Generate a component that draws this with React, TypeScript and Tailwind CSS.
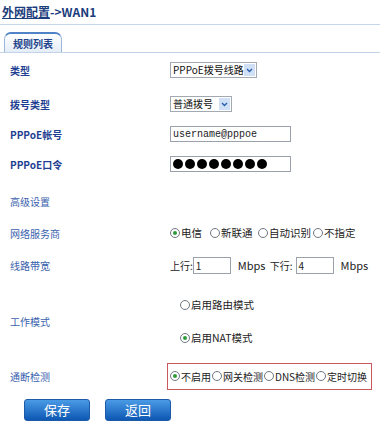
import React from "react";

const cjk = { fontFamily: '"Noto Sans CJK SC", "Liberation Sans", sans-serif' };

const Radio = ({ on }: { on?: boolean }) => (
  <span className="inline-flex h-[10px] w-[10px] shrink-0 items-center justify-center rounded-full border border-[#6f7780] bg-white">
    {on && <span className="h-[4px] w-[4px] rounded-full bg-[#2f9a3a]" />}
  </span>
);

const Opt = ({ on, label, className = "" }: { on?: boolean; label: string; className?: string }) => (
  <span className={"inline-flex shrink-0 items-center gap-[1px] whitespace-nowrap text-[#222] " + className}>
    <Radio on={on} />
    <span>{label}</span>
  </span>
);

const Select = ({ value, w }: { value: string; w: string }) => (
  <div className={"flex h-[16px] items-center border border-[#a2a9b3] bg-white " + w}>
    <span
      className="flex-1 whitespace-nowrap pl-[2px] text-[10px] leading-none text-[#111]"
      style={{ fontFamily: '"Noto Sans CJK SC", serif' }}
    >
      {value}
    </span>
    <span className="mr-[1px] flex h-[12px] w-[11px] shrink-0 items-center justify-center bg-[#cfe0f6]">
      <svg width="7" height="5" viewBox="0 0 7 5">
        <path d="M1 1 L3.5 3.5 L6 1" stroke="#2a5fb0" strokeWidth="1.4" fill="none" />
      </svg>
    </span>
  </div>
);

const Row = ({ label, strong, h, children }: { label: string; strong?: boolean; h: string; children?: React.ReactNode }) => (
  <div className={"flex items-center " + h}>
    <div
      className={
        "w-[170px] shrink-0 whitespace-nowrap pl-[10px] text-[10px] " +
        (strong ? "font-bold text-[#1f3f92]" : "text-[#3a62ad]")
      }
    >
      {label}
    </div>
    <div className="flex items-center whitespace-nowrap">{children}</div>
  </div>
);

export default function App() {
  return (
    <div className="h-[426px] w-[380px] overflow-hidden bg-white" style={cjk}>
      <div className="flex h-[25px] items-center border-b border-[#c6d6ea] pl-[2px] text-[12px] font-bold text-[#1b3d7c]">
        <span className="underline">外网配置</span>
        <span>-&gt;WAN1</span>
      </div>
      <div className="flex h-[28px] items-end border-b border-[#c3d4ea] pl-[4px]">
        <div className="flex h-[20px] w-[58px] items-center justify-center rounded-t-[7px] border border-b-0 border-[#9db8da] border-t-[2px] border-t-[#4f82c6] bg-gradient-to-b from-white to-[#e4edf8] text-[10px] font-bold text-[#22438a]">
          规则列表
        </div>
      </div>

      <Row label="类型" strong h="h-[34px]">
        <Select value="PPPoE拨号线路" w="w-[87px]" />
      </Row>
      <Row label="拨号类型" strong h="h-[34px]">
        <Select value="普通拨号" w="w-[62px]" />
      </Row>
      <Row label="PPPoE帐号" strong h="h-[26px]">
        <div
          className="flex h-[16px] w-[121px] items-center border border-[#9aa1aa] pl-[2px] text-[10px] text-[#222]"
          style={{ fontFamily: '"Liberation Mono", monospace' }}
        >
          username@pppoe
        </div>
      </Row>
      <Row label="PPPoE口令" strong h="h-[34px]">
        <div className="flex h-[16px] w-[121px] items-center gap-[2px] border border-[#9aa1aa] pl-[2px]">
          {Array.from({ length: 8 }).map((_, i) => (
            <span key={i} className="h-[10px] w-[10px] rounded-full bg-black" />
          ))}
        </div>
      </Row>
      <Row label="高级设置" h="h-[40px]" />
      <Row label="网络服务商" h="h-[24px]">
        <div className="flex items-center text-[10.5px]">
          <Opt on label="电信" className="w-[40px]" />
          <Opt label="新联通" className="w-[48px]" />
          <Opt label="自动识别" className="w-[55px]" />
          <Opt label="不指定" />
        </div>
      </Row>
      <Row label="线路带宽" h="h-[40px]">
        <div className="flex items-center text-[11px] text-[#222]">
          <span className="text-[10px]">上行:</span>
          <span className="flex h-[17px] w-[38px] items-center border border-[#9aa1aa] pl-[2px] text-[10px]">1</span>
          <span className="ml-[7px] w-[32px]">Mbps</span>
          <span className="text-[10px]">下行:</span>
          <span className="ml-[3px] flex h-[17px] w-[38px] items-center border border-[#9aa1aa] pl-[2px] text-[10px]">4</span>
          <span className="ml-[7px]">Mbps</span>
        </div>
      </Row>
      <div className="flex h-[72px] items-center">
        <div className="w-[170px] shrink-0 pl-[10px] text-[10px] text-[#3a62ad]">工作模式</div>
        <div className="flex flex-col pl-[10px] text-[10.5px]">
          <div className="flex h-[33px] items-center">
            <Opt label="启用路由模式" />
          </div>
          <div className="flex h-[33px] items-center">
            <Opt on label="启用NAT模式" />
          </div>
        </div>
      </div>
      <div className="flex h-[38px] items-center">
        <div className="w-[167px] shrink-0 pl-[10px] text-[10px] text-[#3a62ad]">通断检测</div>
        <div className="flex h-[27px] w-[205px] items-center gap-[1px] border border-[#c9575b] pl-[2px] text-[10px]">
          <Opt on label="不启用" />
          <Opt label="网关检测" />
          <Opt label="DNS检测" />
          <Opt label="定时切换" />
        </div>
      </div>
      <div className="mt-[4px] flex gap-[15px] pl-[24px]">
        <button className="flex h-[22px] w-[66px] items-center justify-center rounded-[3px] border border-[#1d5aa8] bg-gradient-to-b from-[#4a9be6] to-[#0b57b3] text-[13px] text-white">
          保存
        </button>
        <button className="flex h-[22px] w-[66px] items-center justify-center rounded-[3px] border border-[#1d5aa8] bg-gradient-to-b from-[#4a9be6] to-[#0b57b3] text-[13px] text-white">
          返回
        </button>
      </div>
    </div>
  );
}
